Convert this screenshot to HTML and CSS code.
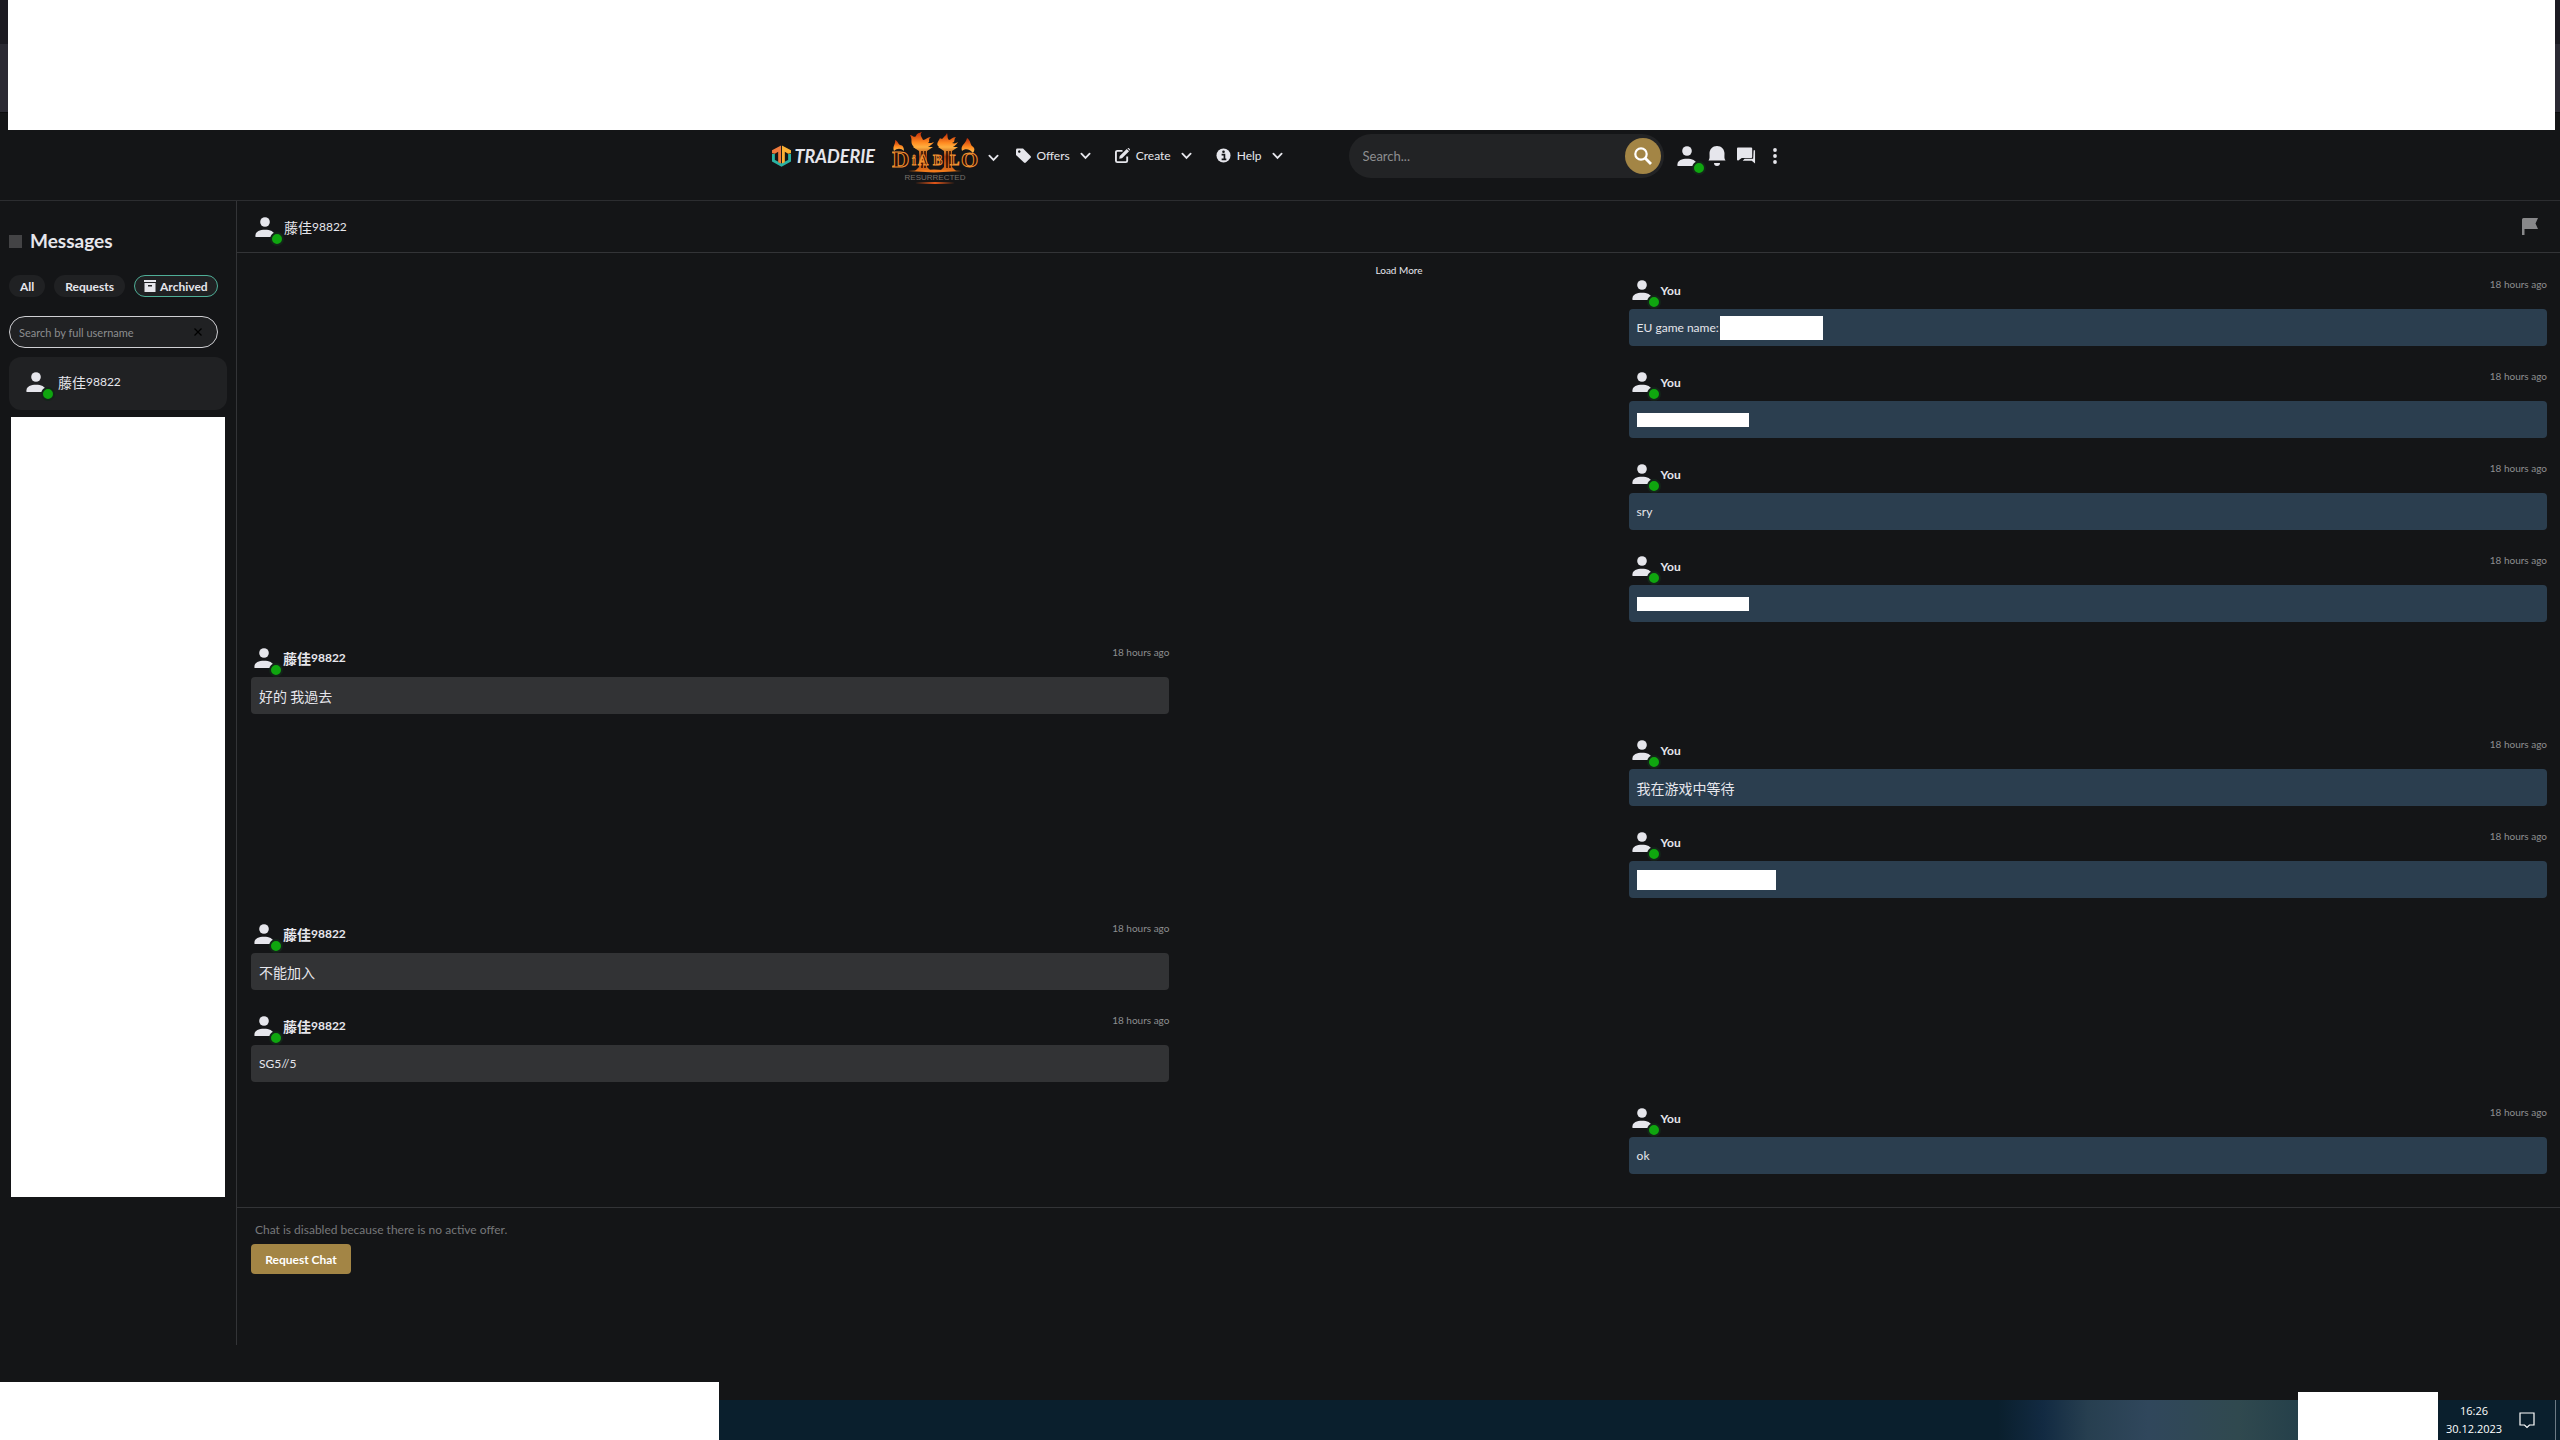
FILE: index.html
```
<!DOCTYPE html>
<html lang="en">
<head>
    <meta charset="UTF-8">
    <meta name="viewport" content="width=device-width, initial-scale=1.0">
    <title>Messages - Traderie</title>
    <link rel="stylesheet" href="styles.css">
</head>
<body>
    <svg class="sprite" aria-hidden="true">
        <symbol id="user" viewBox="0 0 22 22">
            <circle cx="11" cy="5.5" r="5.3"/>
            <path d="M0.5 22v-2c0-4 5-6 10.500-6s10.500 2 10.500 6v2z"/>
        </symbol>
        <symbol id="chevron" viewBox="0 0 12 8">
            <path d="M1.500 1.500L6 6l4.500-4.500" fill="none" stroke="currentColor" stroke-width="2" stroke-linecap="round"/>
        </symbol>
    </svg>

    <div class="browser"><div class="browser-cover"></div></div>

    <header class="navbar">
        <a class="brand" href="#">
            <svg class="brand-mark" viewBox="0 0 20 22">
                <path d="M1.500 9v7L10 20.500l8.500-4.500V9" fill="none" stroke="#2bb3a3" stroke-width="3"/>
                <path d="M0 8V5L9.500 0v19l-3-1.500V6.500L3 8.500z" fill="#f07a3c"/>
                <path d="M20 8V5L10.500 0v19l3-1.500V6.500L17 8.500z" fill="#fbb034"/>
            </svg>
            <span>TRADERIE</span>
        </a>
        <button class="game" aria-label="Diablo II Resurrected">
            <svg class="game-logo" viewBox="0 0 88 54">
                <defs>
                    <linearGradient id="fire" x1="0" y1="0" x2="0" y2="1">
                        <stop offset="0" stop-color="#c22a08"/>
                        <stop offset="0.600" stop-color="#ff8a20"/>
                        <stop offset="1" stop-color="#ffc050"/>
                    </linearGradient>
                    <linearGradient id="stone" x1="0" y1="0" x2="0" y2="1">
                        <stop offset="0" stop-color="#ffb040"/>
                        <stop offset="0.400" stop-color="#a23a0c"/>
                        <stop offset="1" stop-color="#e0701c"/>
                    </linearGradient>
                </defs>
                <g fill="url(#fire)">
                    <path d="M2 20c-2-5 2-7 1-11 3 1 3 4 5 5 3 0 4 3 4 6-3-3-7-3-10 0z"/>
                    <path d="M70 20c-2-6 4-7 5-13 4 3 3 6 5 8 3 2 3 4 1 7-3-4-8-5-11-2z"/>
                    <path d="M21 15c-3-4 0-6-3-11 4 1 4 3 6 1 1-3 3-3 6-4-3 3 0 5 1 8 3 0 4-3 8-3-4 3 0 4-3 6 3 0 4 0 6-1-4 5-8 6-12 7s-8-1-9-3z"/>
                    <path d="M46 15c-2-3 1-5 2-8 2 2 3 0 4-1 2-2 2-2 3-4 1 3 0 5 2 7 2 0 3-3 7-3-3 3 0 5-4 6 3 1 4 0 6-1-3 5-7 6-11 7s-7-1-9-3z"/>
                </g>
                <g fill="url(#stone)">
                    <path d="M21 16h20l-6 4v16l4 4H23l4-4V20z"/>
                    <path d="M46 16h20l-6 4v16l4 4H48l4-4V20z"/>
                </g>
                <g stroke="#2a0d04" stroke-width="1.500">
                    <path d="M30 20v17M33 20v17M55 20v17M58 20v17"/>
                </g>
                <g class="game-name">
                    <text x="0" y="36" font-size="24">D</text>
                    <text x="20" y="34" font-size="14">i</text>
                    <text x="26" y="34" font-size="14">A</text>
                    <text x="41" y="34" font-size="14">B</text>
                    <text x="58" y="34" font-size="14">L</text>
                    <text x="69" y="36" font-size="22">O</text>
                </g>
                <path d="M16 40L42 38.500l28 1.500-28 1.500z" fill="#f07a1c"/>
                <text class="game-sub" x="43" y="49" text-anchor="middle">RESURRECTED</text>
                <path d="M23 52l20-1 20 1-20 1z" fill="#e0561a"/>
            </svg>
            <svg class="chevron"><use href="#chevron"/></svg>
        </button>
        <nav class="menu">
            <button>
                <svg class="menu-icon" viewBox="0 0 16 16"><path fill-rule="evenodd" d="M0 2a1.500 1.500 0 0 1 1.500-1.500h6L15.500 8.500a1.500 1.500 0 0 1 0 2L10.500 15.500a1.500 1.500 0 0 1-2 0L0 7.500zM3.500 2.500a1.300 1.300 0 1 0 0.010 0z"/></svg>
                Offers
                <svg class="chevron"><use href="#chevron"/></svg>
            </button>
            <button>
                <svg class="menu-icon" viewBox="0 0 16 16"><path d="M8 3H2.500A1.500 1.500 0 0 0 1 4.500v9A1.500 1.500 0 0 0 2.500 15h9a1.500 1.500 0 0 0 1.500-1.500V9" fill="none" stroke="currentColor" stroke-width="2"/><path d="M5 8.500L12.500 1l2.500 2.500L7.500 11 4.500 11.500zM13.200 0.300l2.500 2.500 0.300-1.500L14.500 0z"/></svg>
                Create
                <svg class="chevron"><use href="#chevron"/></svg>
            </button>
            <button>
                <svg class="menu-icon" viewBox="0 0 16 16"><circle cx="8" cy="8" r="7.500"/><path d="M6 7h3v5M6 12.200h5" fill="none" stroke="#141517" stroke-width="1.800"/><circle cx="8" cy="4" r="1.400" fill="#141517"/></svg>
                Help
                <svg class="chevron"><use href="#chevron"/></svg>
            </button>
        </nav>
        <form class="search">
            <input type="text" placeholder="Search..." aria-label="Search">
            <button type="button" aria-label="Search">
                <svg viewBox="0 0 20 20"><circle cx="8" cy="8" r="5.700" fill="none" stroke="#fff" stroke-width="2.200"/><path d="M12 12l6 6" stroke="#fff" stroke-width="2.800"/></svg>
            </button>
        </form>
        <div class="account">
            <button class="avatar" aria-label="Profile"><svg><use href="#user"/></svg><i class="dot"></i></button>
            <button class="bell" aria-label="Notifications">
                <svg viewBox="0 0 18 22"><path d="M0.500 15.500c1.500-2 1-4 1-7 0-4 3-7.500 7.500-7.500s7.500 3.500 7.500 7.500c0 3-0.500 5 1 7zM6 18h6a3 3 0 0 1-6 0z"/></svg>
            </button>
            <button class="chats" aria-label="Messages">
                <svg viewBox="0 0 20 18"><path d="M1 0h14a1 1 0 0 1 1 1v9a1 1 0 0 1-1 1H5l-4 3-1-1V1a1 1 0 0 1 1-1z"/><path d="M17.500 3H19v14l-3.500-3H6l2-2h9z"/></svg>
            </button>
            <button class="more" aria-label="More">
                <svg viewBox="0 0 4 16"><circle cx="2" cy="2" r="1.900"/><circle cx="2" cy="8" r="1.900"/><circle cx="2" cy="14" r="1.900"/></svg>
            </button>
        </div>
    </header>

    <main class="page">
        <aside class="sidebar">
            <h1><span class="square"></span>Messages</h1>
            <div class="filters">
                <button>All</button>
                <button>Requests</button>
                <button class="active"><svg viewBox="0 0 12 12"><path fill-rule="evenodd" d="M0 0h12v2H0zM0.500 3h11v9H0.500zM4 5h4v1.500H4z"/></svg>Archived</button>
            </div>
            <div class="user-search">
                <input type="text" placeholder="Search by full username" aria-label="Search by full username">
                <button aria-label="Clear"><svg viewBox="0 0 8 8"><path d="M0.500 0.500l7 7M7.500 0.500l-7 7" stroke="#000" stroke-width="1.300"/></svg></button>
            </div>
            <a class="conversation" href="#">
                <span class="avatar"><svg><use href="#user"/></svg><i class="dot"></i></span>
                <span class="name"><span class="zh">藤佳</span>98822</span>
            </a>
            <div class="sidebar-cover"></div>
        </aside>

        <section class="chat">
            <div class="chat-header">
                <span class="avatar"><svg><use href="#user"/></svg><i class="dot"></i></span>
                <span class="name"><span class="zh">藤佳</span>98822</span>
                <button class="flag" aria-label="Report"><svg viewBox="0 0 16 17"><path d="M0 17V1.500A1.500 1.500 0 0 1 1.500 0H16l-2.500 5.500L16 11H2.500v6z"/></svg></button>
            </div>

            <div class="log">
                <button class="load-more">Load More</button>

                <article class="message mine">
                    <div class="meta"><span class="avatar"><svg><use href="#user"/></svg><i class="dot"></i></span><b>You</b><time>18 hours ago</time></div>
                    <p>EU game name:<span class="cover cover-name"></span></p>
                </article>
                <article class="message mine">
                    <div class="meta"><span class="avatar"><svg><use href="#user"/></svg><i class="dot"></i></span><b>You</b><time>18 hours ago</time></div>
                    <p><span class="cover"></span></p>
                </article>
                <article class="message mine">
                    <div class="meta"><span class="avatar"><svg><use href="#user"/></svg><i class="dot"></i></span><b>You</b><time>18 hours ago</time></div>
                    <p>sry</p>
                </article>
                <article class="message mine">
                    <div class="meta"><span class="avatar"><svg><use href="#user"/></svg><i class="dot"></i></span><b>You</b><time>18 hours ago</time></div>
                    <p><span class="cover"></span></p>
                </article>
                <article class="message">
                    <div class="meta"><span class="avatar"><svg><use href="#user"/></svg><i class="dot"></i></span><b class="name"><span class="zh">藤佳</span>98822</b><time>18 hours ago</time></div>
                    <p class="zh">好的 我過去</p>
                </article>
                <article class="message mine">
                    <div class="meta"><span class="avatar"><svg><use href="#user"/></svg><i class="dot"></i></span><b>You</b><time>18 hours ago</time></div>
                    <p class="zh">我在游戏中等待</p>
                </article>
                <article class="message mine">
                    <div class="meta"><span class="avatar"><svg><use href="#user"/></svg><i class="dot"></i></span><b>You</b><time>18 hours ago</time></div>
                    <p><span class="cover cover-long"></span></p>
                </article>
                <article class="message">
                    <div class="meta"><span class="avatar"><svg><use href="#user"/></svg><i class="dot"></i></span><b class="name"><span class="zh">藤佳</span>98822</b><time>18 hours ago</time></div>
                    <p class="zh">不能加入</p>
                </article>
                <article class="message">
                    <div class="meta"><span class="avatar"><svg><use href="#user"/></svg><i class="dot"></i></span><b class="name"><span class="zh">藤佳</span>98822</b><time>18 hours ago</time></div>
                    <p>SG5//5</p>
                </article>
                <article class="message mine">
                    <div class="meta"><span class="avatar"><svg><use href="#user"/></svg><i class="dot"></i></span><b>You</b><time>18 hours ago</time></div>
                    <p>ok</p>
                </article>
            </div>

            <div class="chat-footer">
                <p>Chat is disabled because there is no active offer.</p>
                <button>Request Chat</button>
            </div>
        </section>
    </main>

    <footer class="taskbar">
        <div class="taskbar-cover"></div>
        <div class="glow"></div>
        <div class="tray-cover"></div>
        <div class="clock"><span>16:26</span><span>30.12.2023</span></div>
        <button class="notice" aria-label="Notifications">
            <svg viewBox="0 0 16 17"><path d="M1 1h14v12h-4.500L8 15.500 5.500 13H1z" fill="none" stroke="#fff" stroke-width="1.200"/></svg>
        </button>
    </footer>
</body>
</html>
```
FILE: styles.css
```
* {
    box-sizing: border-box;
}
body {
    margin: 0;
    min-height: 100vh;
    display: flex;
    flex-direction: column;
    background-color: #141517;
    color: #e6e6ec;
    font-family: Lato, "Noto Sans CJK SC", sans-serif;
    font-size: 12px;
}
h1, p {
    margin: 0;
}
button, input {
    font: inherit;
    color: inherit;
    background: none;
    border: none;
    padding: 0;
    outline: none;
}
button {
    display: flex;
    align-items: center;
    cursor: pointer;
}
a {
    color: inherit;
    text-decoration: none;
}
svg {
    display: block;
    fill: currentColor;
}
.sprite {
    position: absolute;
    width: 0;
    height: 0;
}
.name {
    display: flex;
    align-items: center;
    line-height: 16px;
}
.zh {
    font-family: "Noto Sans CJK SC", sans-serif;
    font-size: 14px;
    line-height: 16px;
}

/* browser bar */
.browser {
    position: relative;
    height: 113px;
    background: linear-gradient(#1c1b22 44px, #2b2a33 44px);
    border-bottom: 1px solid #0c0c0d;
}
.browser-cover {
    position: absolute;
    top: 0;
    left: 8px;
    right: 5px;
    height: 130px;
    background-color: #fff;
}

/* navbar */
.navbar {
    display: flex;
    align-items: center;
    justify-content: center;
    height: 88px;
    border-bottom: 1px solid #2c2d30;
    padding: 0 12px 2px 0;
}
.brand {
    display: flex;
    align-items: center;
    gap: 4px;
    width: 120px;
    font-size: 18px;
    font-weight: bold;
    font-style: italic;
}
.brand-mark {
    width: 19px;
    height: 22px;
}
.game {
    gap: 8px;
    margin: 4px 17px 0 0;
}
.game-logo {
    width: 88px;
    height: 54px;
}
.game-name {
    font-family: "Liberation Serif", serif;
    font-weight: bold;
    fill: #2a0d04;
    stroke: #f09030;
    stroke-width: 1;
}
.game-sub {
    font-family: "Liberation Sans", sans-serif;
    font-size: 8px;
    fill: #77706c;
}
.chevron {
    width: 11px;
    height: 8px;
}
.menu {
    display: flex;
    gap: 24px;
    width: 333px;
}
.menu button {
    gap: 6px;
}
.menu .chevron {
    margin-left: 4px;
}
.menu-icon {
    width: 15px;
    height: 15px;
}
.search {
    display: flex;
    align-items: center;
    width: 315px;
    height: 44px;
    padding: 0 3px 0 14px;
    border-radius: 22px;
    background-color: #222325;
}
.search input {
    flex: 1;
    min-width: 0;
    font-size: 13px;
}
.search button {
    justify-content: center;
    width: 36px;
    height: 36px;
    border-radius: 50%;
    background-color: #a38545;
}
.search button svg {
    width: 20px;
    height: 20px;
}
input::placeholder {
    color: #8d8e90;
    opacity: 1;
}
.account {
    display: flex;
    align-items: center;
    gap: 11px;
    margin-left: 13px;
}
.bell svg {
    width: 18px;
    height: 22px;
}
.chats svg {
    width: 19px;
    height: 18px;
}
.more {
    margin-left: 6px;
}
.more svg {
    width: 4px;
    height: 16px;
}
.avatar {
    position: relative;
    width: 20px;
    height: 22px;
}
.avatar svg {
    width: 20px;
    height: 22px;
}
.dot {
    position: absolute;
    right: -9px;
    bottom: -8px;
    width: 14px;
    height: 14px;
    border: 2px solid #14251a;
    border-radius: 50%;
    background-color: #0fa60f;
}

/* layout */
.page {
    flex: 1;
    display: flex;
    margin-bottom: 55px;
}
.sidebar {
    display: flex;
    flex-direction: column;
    width: 237px;
    padding: 25px 9px 148px;
    border-right: 1px solid #333437;
}
.sidebar h1 {
    display: flex;
    align-items: center;
    gap: 8px;
    font-size: 19px;
    line-height: 30px;
    margin-bottom: 19px;
}
.square {
    width: 13px;
    height: 13px;
    background-color: #434345;
}
.filters {
    display: flex;
    gap: 9px;
    margin-bottom: 19px;
}
.filters button {
    gap: 4px;
    height: 22px;
    padding: 0 11px;
    border-radius: 11px;
    background-color: #202123;
    font-weight: bold;
}
.filters .active {
    padding: 0 9px;
    border: 1px solid #4fae97;
}
.filters svg {
    width: 12px;
    height: 12px;
}
.user-search {
    display: flex;
    align-items: center;
    width: 209px;
    height: 32px;
    padding: 0 15px 0 9px;
    border: 1px solid #d0d0d4;
    border-radius: 16px;
    background-color: #202123;
    font-size: 11px;
}
.user-search input {
    flex: 1;
    min-width: 0;
}
.user-search svg {
    width: 8px;
    height: 8px;
}
.conversation {
    display: flex;
    align-items: center;
    gap: 12px;
    height: 53px;
    margin: 9px 0 7px;
    padding: 0 0 3px 17px;
    border-radius: 12px;
    background-color: #202123;
}
.sidebar-cover {
    flex: 1;
    margin: 0 2px;
    background-color: #fff;
}

/* chat */
.chat {
    flex: 1;
    display: flex;
    flex-direction: column;
}
.chat-header {
    display: flex;
    align-items: center;
    gap: 9px;
    height: 52px;
    padding: 0 22px 0 18px;
    border-bottom: 1px solid #333437;
}
.flag {
    margin-left: auto;
    color: #88888a;
}
.flag svg {
    width: 16px;
    height: 17px;
}
.log {
    flex: 1;
    padding: 12px 13px 0 14px;
}
.load-more {
    margin: 0 auto;
    font-size: 10px;
    line-height: 10px;
}
.message {
    width: 40%;
    margin-bottom: 21px;
}
.message.mine {
    margin-left: auto;
}
.meta {
    display: flex;
    align-items: center;
    gap: 9px;
    height: 30px;
    margin-bottom: 4px;
    padding-left: 3px;
}
.meta time {
    align-self: flex-start;
    margin-left: auto;
    font-size: 10px;
    line-height: 18px;
    color: #8d8e90;
}
.message p {
    display: flex;
    align-items: center;
    height: 37px;
    padding: 0 8px;
    border-radius: 4px;
    background-color: #323335;
}
.message.mine p {
    background-color: #2b3e4f;
}
.cover {
    width: 112px;
    height: 14px;
    background-color: #fff;
}
.cover-name {
    width: 103px;
    height: 24px;
    margin-left: 1px;
}
.cover-long {
    width: 139px;
    height: 20px;
}
.chat-footer {
    height: 138px;
    padding: 12px 14px;
    border-top: 1px solid #333437;
}
.chat-footer p {
    padding-left: 4px;
    margin-bottom: 4px;
    line-height: 20px;
    color: #77787a;
}
.chat-footer button {
    justify-content: center;
    width: 100px;
    height: 30px;
    border-radius: 4px;
    background-color: #a38545;
    color: #fff;
    font-weight: bold;
}

/* taskbar */
.taskbar {
    position: relative;
    display: flex;
    align-items: center;
    justify-content: flex-end;
    height: 40px;
    background-color: #0a1f2d;
    color: #fff;
}
.taskbar-cover {
    position: absolute;
    left: 0;
    bottom: 0;
    width: 719px;
    height: 58px;
    background-color: #fff;
}
.glow {
    width: 300px;
    height: 40px;
    background: linear-gradient(90deg, #0a1f2d, #122a42 15%, #273f50 30%, #30475c 50%, #30494f 80%, #25404a);
}
.tray-cover {
    align-self: flex-end;
    flex-shrink: 0;
    width: 140px;
    height: 48px;
    background-color: #fff;
}
.clock {
    display: flex;
    flex-direction: column;
    align-items: center;
    width: 72px;
    font-family: "Open Sans", sans-serif;
    font-size: 11px;
    line-height: 18px;
}
.notice {
    height: 40px;
    padding: 0 20px 0 9px;
    margin-right: 4px;
    border-right: 1px solid #6d7a84;
}
.notice svg {
    width: 16px;
    height: 17px;
}
```
